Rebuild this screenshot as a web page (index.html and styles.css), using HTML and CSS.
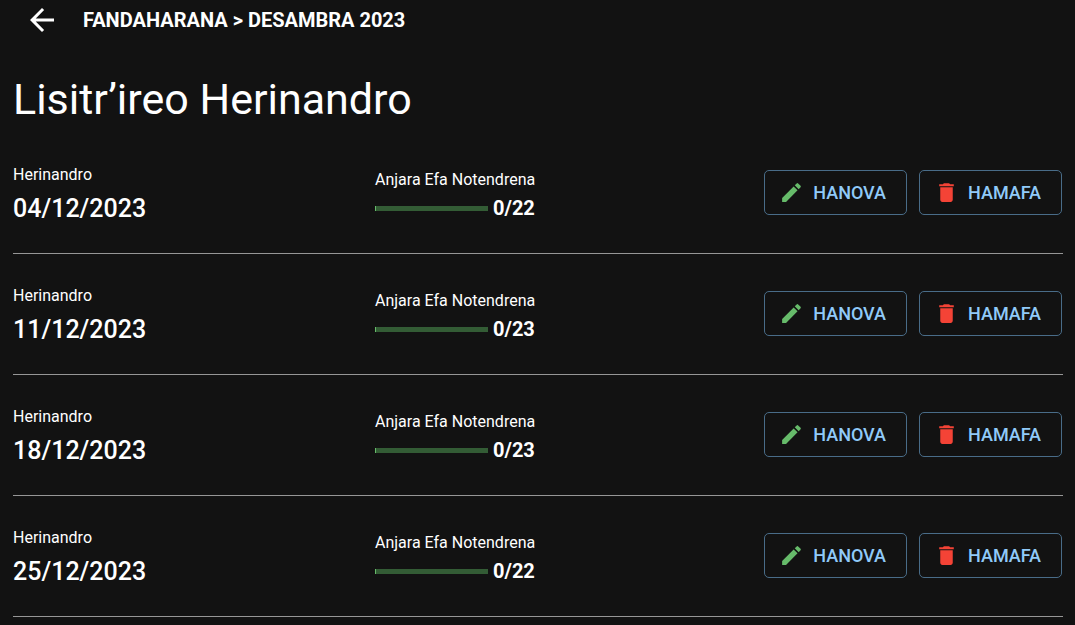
FILE: index.html
```html
<!DOCTYPE html>
<html lang="mg">
<head>
<meta charset="utf-8">
<meta name="viewport" content="width=device-width, initial-scale=1">
<title>Lisitr’ireo Herinandro</title>
<link rel="stylesheet" href="styles.css">
</head>
<body>
<svg class="sprite" aria-hidden="true">
  <symbol id="edit" viewBox="0 0 24 24"><path d="M3 17.25V21h3.75L17.81 9.94l-3.75-3.75L3 17.25zM20.71 7.04c.39-.39.39-1.02 0-1.41l-2.34-2.34a.9959.9959 0 0 0-1.41 0l-1.83 1.83 3.75 3.75 1.83-1.83z"/></symbol>
  <symbol id="delete" viewBox="0 0 24 24"><path d="M6 19c0 1.1.9 2 2 2h8c1.1 0 2-.9 2-2V7H6v12zM19 4h-3.500l-1-1h-5l-1 1H5v2h14V4z"/></symbol>
</svg>
<header class="topbar">
  <button class="back" type="button" aria-label="Back"><svg viewBox="0 0 24 24"><path d="M20 11H7.830l5.590-5.590L12 4l-8 8 8 8 1.410-1.410L7.830 13H20v-2z"/></svg></button>
  <span class="crumbs">FANDAHARANA &gt; DESAMBRA 2023</span>
</header>
<main class="page">
  <h1 class="title">Lisitr’ireo Herinandro</h1>
  <ul class="weeks">
    <li class="week">
      <div class="date"><span class="label">Herinandro</span><strong class="day">04/12/2023</strong></div>
      <div class="parts"><span class="label">Anjara Efa Notendrena</span><div class="count"><span class="bar"></span><strong class="ratio">0/22</strong></div></div>
      <div class="actions"><button class="btn" type="button"><svg class="icon edit"><use href="#edit"/></svg>HANOVA</button><button class="btn" type="button"><svg class="icon delete"><use href="#delete"/></svg>HAMAFA</button></div>
    </li>
    <li class="week">
      <div class="date"><span class="label">Herinandro</span><strong class="day">11/12/2023</strong></div>
      <div class="parts"><span class="label">Anjara Efa Notendrena</span><div class="count"><span class="bar"></span><strong class="ratio">0/23</strong></div></div>
      <div class="actions"><button class="btn" type="button"><svg class="icon edit"><use href="#edit"/></svg>HANOVA</button><button class="btn" type="button"><svg class="icon delete"><use href="#delete"/></svg>HAMAFA</button></div>
    </li>
    <li class="week">
      <div class="date"><span class="label">Herinandro</span><strong class="day">18/12/2023</strong></div>
      <div class="parts"><span class="label">Anjara Efa Notendrena</span><div class="count"><span class="bar"></span><strong class="ratio">0/23</strong></div></div>
      <div class="actions"><button class="btn" type="button"><svg class="icon edit"><use href="#edit"/></svg>HANOVA</button><button class="btn" type="button"><svg class="icon delete"><use href="#delete"/></svg>HAMAFA</button></div>
    </li>
    <li class="week">
      <div class="date"><span class="label">Herinandro</span><strong class="day">25/12/2023</strong></div>
      <div class="parts"><span class="label">Anjara Efa Notendrena</span><div class="count"><span class="bar"></span><strong class="ratio">0/22</strong></div></div>
      <div class="actions"><button class="btn" type="button"><svg class="icon edit"><use href="#edit"/></svg>HANOVA</button><button class="btn" type="button"><svg class="icon delete"><use href="#delete"/></svg>HAMAFA</button></div>
    </li>
  </ul>
</main>
</body>
</html>
```
FILE: styles.css
```css
* { box-sizing: border-box; }
body { margin: 0; background: #121212; color: #fff; font-family: Roboto, sans-serif; }
.sprite { display: none; }
.topbar { display: flex; align-items: center; gap: 23px; height: 40px; padding-left: 24px; }
.back { display: flex; padding: 0; border: 0; background: none; color: #fff; cursor: pointer; }
.back svg { width: 36px; height: 36px; fill: currentColor; }
.crumbs { font-size: 20px; font-weight: 700; line-height: 24px; }
.page { padding: 32px 12px 0 13px; }
.title { margin: 0 0 7px; font-size: 43px; font-weight: 400; line-height: 54px; }
.weeks { margin: 0; padding: 0; list-style: none; }
.week { display: grid; grid-template-columns: 362px 1fr auto; align-items: start; padding: 30px 0 28px; border-bottom: 1px solid #969696; }
.date, .parts { display: flex; flex-direction: column; }
.date { gap: 6px; }
.parts { padding-top: 5px; }
.label { font-size: 16px; line-height: 24px; }
.day { font-size: 25px; font-weight: 500; line-height: 32px; }
.count { display: flex; align-items: center; gap: 5px; }
.bar { width: 113px; height: 5px; border-left: 1px solid #66bb6a; background: #335c35; }
.ratio { font-size: 20px; line-height: 32px; }
.actions { display: flex; gap: 12px; padding: 7px 1px 0 0; }
.btn { display: flex; align-items: center; gap: 9px; height: 45px; padding: 0 20px 0 14px; border: 1px solid #496c88; border-radius: 5px; background: none; color: #90caf9; font: 500 18px/24px Roboto, sans-serif; cursor: pointer; }
.icon { width: 25px; height: 25px; fill: currentColor; }
.edit { color: #66bb6a; }
.delete { color: #f44336; }
```
